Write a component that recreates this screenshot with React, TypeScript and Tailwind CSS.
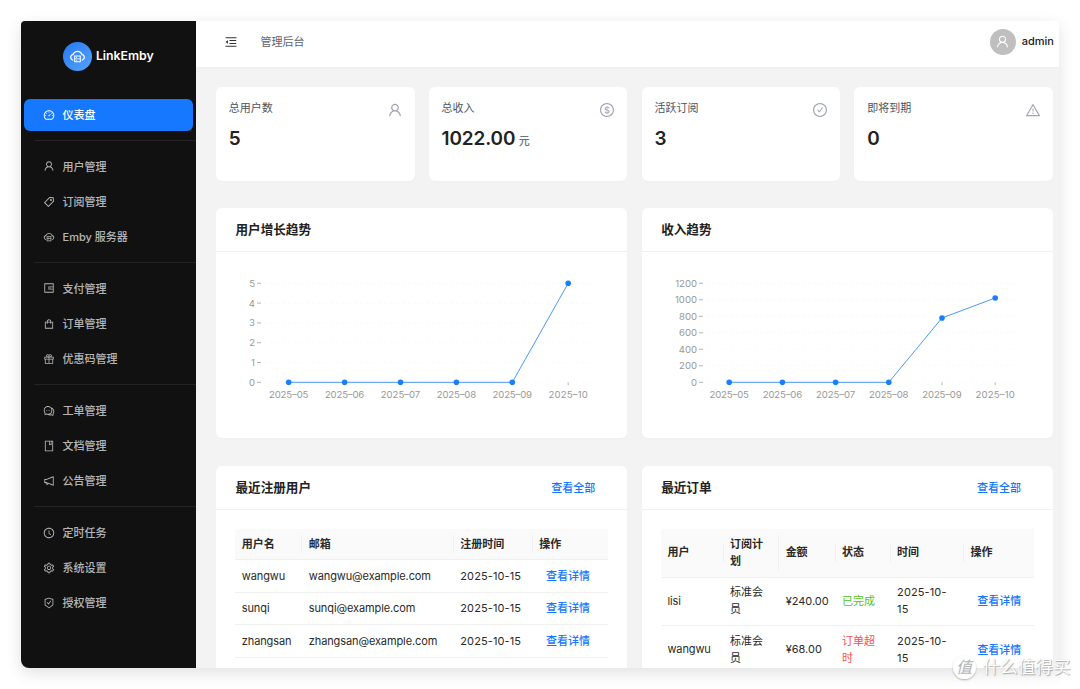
import type { ReactNode } from "react"
import type { IconType } from "react-icons"
import {
  AiOutlineBook,
  AiOutlineCheckCircle,
  AiOutlineClockCircle,
  AiOutlineCloudServer,
  AiOutlineComment,
  AiOutlineDashboard,
  AiOutlineDollarCircle,
  AiOutlineGift,
  AiOutlineMenuFold,
  AiOutlineNotification,
  AiOutlineSafetyCertificate,
  AiOutlineSetting,
  AiOutlineShopping,
  AiOutlineTag,
  AiOutlineUser,
  AiOutlineWallet,
  AiOutlineWarning,
} from "react-icons/ai"

type MenuItem = { label: string; icon: IconType }

const menuGroups: MenuItem[][] = [
  [{ label: "仪表盘", icon: AiOutlineDashboard }],
  [
    { label: "用户管理", icon: AiOutlineUser },
    { label: "订阅管理", icon: AiOutlineTag },
    { label: "Emby 服务器", icon: AiOutlineCloudServer },
  ],
  [
    { label: "支付管理", icon: AiOutlineWallet },
    { label: "订单管理", icon: AiOutlineShopping },
    { label: "优惠码管理", icon: AiOutlineGift },
  ],
  [
    { label: "工单管理", icon: AiOutlineComment },
    { label: "文档管理", icon: AiOutlineBook },
    { label: "公告管理", icon: AiOutlineNotification },
  ],
  [
    { label: "定时任务", icon: AiOutlineClockCircle },
    { label: "系统设置", icon: AiOutlineSetting },
    { label: "授权管理", icon: AiOutlineSafetyCertificate },
  ],
]

const stats = [
  { label: "总用户数", value: "5", icon: AiOutlineUser },
  { label: "总收入", value: "1022.00", unit: "元", icon: AiOutlineDollarCircle },
  { label: "活跃订阅", value: "3", icon: AiOutlineCheckCircle },
  { label: "即将到期", value: "0", icon: AiOutlineWarning },
]

const months = ["2025–05", "2025–06", "2025–07", "2025–08", "2025–09", "2025–10"]

const users = ["wangwu", "sunqi", "zhangsan"]

const orders = [
  { user: "lisi", amount: "¥240.00", status: "已完成", color: "text-[#52c41a]" },
  { user: "wangwu", amount: "¥68.00", status: "订单超时", color: "text-[#ff4d4f]" },
]

function Sidebar() {
  return (
    <aside className="flex w-[175.4px] shrink-0 flex-col bg-[#111] text-white/70">
      <div className="flex h-[76px] items-center gap-[3.5px] pb-[6px] pl-[42.4px]">
        <div className="flex size-[29px] items-center justify-center rounded-full bg-linear-to-br from-[#2478f5] to-[#56a2fb] text-white">
          <AiOutlineCloudServer size={17} />
        </div>
        <span className="pt-px text-[12.3px] font-semibold text-white">LinkEmby</span>
      </div>
      {menuGroups.map((group, i) => (
        <div key={i} className="flex flex-col">
          {i > 0 && <div className="mt-[7.9px] mb-[7.8px] ml-[13px] h-px bg-[#242424]" />}
          {group.map(({ label, icon: Icon }) => (
            <div
              key={label}
              className={
                "mx-[3px] my-[1.57px] flex h-8 items-center gap-2 rounded-md pl-[18.5px] text-[11px] font-medium " +
                (i === 0 ? "bg-[#1677ff] text-white" : "")
              }
            >
              <Icon size={12} />
              <span className="pt-[1.4px]">{label}</span>
            </div>
          ))}
        </div>
      ))}
    </aside>
  )
}

function Header() {
  return (
    <header className="flex h-[46px] shrink-0 items-center bg-white pr-[5px] pb-[5px] pl-[28px] shadow-[0_1px_2px_rgba(0,0,0,0.03)]">
      <AiOutlineMenuFold size={14} className="text-[#333]" />
      <span className="ml-[22px] pt-px text-[11px] text-[#5d6370]">管理后台</span>
      <div className="ml-auto flex items-center gap-[6px]">
        <div className="flex size-[26px] items-center justify-center rounded-full bg-[#bfbfbf] text-white">
          <AiOutlineUser size={15} />
        </div>
        <span className="text-[11px] font-medium text-[#222]">admin</span>
      </div>
    </header>
  )
}

function Card({ title, link, className, children }: { title: string; link?: boolean; className: string; children: ReactNode }) {
  return (
    <section className={"flex flex-col rounded-md bg-white shadow-[0_1px_2px_rgba(0,0,0,0.02)] " + className}>
      <div className="flex h-11 shrink-0 items-center justify-between border-b border-[#f0f0f0] pt-[2px] pr-8 pl-[19.5px]">
        <h2 className="text-[12.6px] font-semibold text-[#222]">{title}</h2>
        {link && <a className="text-[11px] font-medium text-[#1677ff]">查看全部</a>}
      </div>
      {children}
    </section>
  )
}

type ChartProps = { values: number[]; max: number; step: number; left: number; start: number; gap: number }

function LineChart({ values, max, step, left, start, gap }: ChartProps) {
  const bottom = 130.3
  const y = (v: number) => bottom - (v / max) * 99
  const x = (i: number) => start + i * gap
  const ticks = Array.from({ length: max / step + 1 }, (_, i) => i * step)

  return (
    <svg width="411" height="185" viewBox="0 0 411 185" className="text-[9.6px]" fill="#999">
      {ticks.map((t) => (
        <g key={t}>
          <text x={left - 6} y={y(t) + 3.5} textAnchor="end">{t}</text>
          <line x1={left - 4} x2={left} y1={y(t)} y2={y(t)} stroke="#aaa" strokeWidth="0.9" />
          <line x1={left + 3} x2="377" y1={y(t)} y2={y(t)} stroke="#fafafa" strokeDasharray="3 3" />
        </g>
      ))}
      {months.map((m, i) => (
        <g key={m}>
          <line x1={x(i)} x2={x(i)} y1={bottom} y2={bottom + 3} stroke="#aaa" strokeWidth="0.8" />
          <text x={x(i)} y="146.3" textAnchor="middle" textLength="39.4">{m}</text>
        </g>
      ))}
      <polyline points={values.map((v, i) => `${x(i)},${y(v)}`).join(" ")} fill="none" stroke="#4a98fb" strokeWidth="1" />
      {values.map((v, i) => (
        <circle key={i} cx={x(i)} cy={y(v)} r="2.8" fill="#1a7fff" />
      ))}
    </svg>
  )
}

function HeadCell({ children, last }: { children: ReactNode; last?: boolean }) {
  return (
    <th className="p-0 font-semibold">
      <div className={"flex min-h-[18px] items-center px-[6.3px] pt-px " + (last ? "" : "border-r border-[#f0f0f0]")}>
        {children}
      </div>
    </th>
  )
}

function UserTable() {
  return (
    <table className="mx-[19.5px] mt-[19px] w-[373px] table-fixed text-left text-[11px] leading-[17.3px] text-[#2a2a2a]">
      <colgroup>
        <col className="w-[67px]" />
        <col className="w-[151.5px]" />
        <col className="w-[79px]" />
        <col />
      </colgroup>
      <thead>
        <tr className="h-[31px] border-b border-[#f0f0f0] bg-[#fafafa]">
          <HeadCell>用户名</HeadCell>
          <HeadCell>邮箱</HeadCell>
          <HeadCell>注册时间</HeadCell>
          <HeadCell last>操作</HeadCell>
        </tr>
      </thead>
      <tbody>
        {users.map((name) => (
          <tr key={name} className="h-[32.7px] border-b border-[#f0f0f0]">
            <td className="px-[6.3px] pt-px tracking-[-0.01em]">{name}</td>
            <td className="px-[6.3px] pt-px tracking-[-0.01em]">{name}@example.com</td>
            <td className="px-[6.3px] pt-px tracking-[0.01em] whitespace-nowrap">2025-10-15</td>
            <td className="pt-px pl-[13px] font-medium text-[#1677ff]">查看详情</td>
          </tr>
        ))}
      </tbody>
    </table>
  )
}

function OrderTable() {
  return (
    <table className="mx-[19.5px] mt-[19px] w-[373px] table-fixed text-left text-[11px] leading-[17.3px] text-[#2a2a2a]">
      <colgroup>
        <col className="w-[62.5px]" />
        <col className="w-[55.7px]" />
        <col className="w-[56.3px]" />
        <col className="w-[55.2px]" />
        <col className="w-[73.5px]" />
        <col />
      </colgroup>
      <thead>
        <tr className="h-[48.5px] border-b border-[#f0f0f0] bg-[#fafafa]">
          <HeadCell>用户</HeadCell>
          <HeadCell>订阅计划</HeadCell>
          <HeadCell>金额</HeadCell>
          <HeadCell>状态</HeadCell>
          <HeadCell>时间</HeadCell>
          <HeadCell last>操作</HeadCell>
        </tr>
      </thead>
      <tbody>
        {orders.map((o) => (
          <tr key={o.user} className="h-[48.7px] border-b border-[#f0f0f0]">
            <td className="px-[6.3px] tracking-[-0.01em]">{o.user}</td>
            <td className="px-[6.3px]">标准会员</td>
            <td className="pl-[6.3px] whitespace-nowrap">{o.amount}</td>
            <td className={"px-[6.3px] " + o.color}>{o.status}</td>
            <td className="px-[6.3px] tracking-[0.01em]">2025-10-<br />15</td>
            <td className="pt-px pl-[13px] font-medium text-[#1677ff]">查看详情</td>
          </tr>
        ))}
      </tbody>
    </table>
  )
}

function Watermark() {
  return (
    <div className="absolute right-[9.5px] bottom-[10px] flex items-center gap-[7px] text-white">
      <span className="flex size-[23px] items-center justify-center rounded-full bg-white/85 text-[16px] text-[#b4b4b4] italic shadow-[0_1px_2px_rgba(0,0,0,0.3)]">
        值
      </span>
      <span className="text-[17.6px] leading-6 [text-shadow:1px_1px_1px_rgba(0,0,0,0.3),0_0_1px_rgba(0,0,0,0.15)]">
        什么值得买
      </span>
    </div>
  )
}

export default function App() {
  return (
    <div className="relative h-[689px] w-[1080px] overflow-hidden bg-white p-[21px] font-['Inter','Noto_Sans_CJK_SC',sans-serif]">
      <div className="flex h-[647px] w-[1038px] overflow-hidden rounded-[4px] rounded-bl-[8px] bg-[#f3f3f3] shadow-[0_5px_16px_rgba(0,0,0,0.12)]">
        <Sidebar />
        <div className="flex min-w-0 flex-1 flex-col">
          <Header />
          <main className="flex flex-col pt-5 pr-[6px] pl-[19.6px]">
            <div className="grid grid-cols-4 gap-[14.3px]">
              {stats.map(({ label, value, unit, icon: Icon }) => (
                <div key={label} className="flex h-[94px] justify-between rounded-md bg-white pr-[12px] pl-[12.8px] shadow-[0_1px_2px_rgba(0,0,0,0.02)]">
                  <div>
                    <p className="mt-[13px] text-[11px] leading-[17px] text-[#4b5563]">{label}</p>
                    <p className="mt-[9px] text-[18.9px] leading-[26px] font-semibold tracking-[-0.005em] text-[#222]">
                      {value}
                      {unit && <span className="ml-[3.5px] text-[11px] font-medium text-[#6b7280]">{unit}</span>}
                    </p>
                  </div>
                  <Icon size={16} className="mt-[15px] text-[#a0a5b0]" />
                </div>
              ))}
            </div>
            <div className="mt-[27px] grid grid-cols-2 gap-[14.3px]">
              <Card title="用户增长趋势" className="h-[230px]">
                <LineChart values={[0, 0, 0, 0, 0, 5]} max={5} step={1} left={45} start={72.7} gap={55.9} />
              </Card>
              <Card title="收入趋势" className="h-[230px]">
                <LineChart values={[0, 0, 0, 0, 780, 1022]} max={1200} step={200} left={61} start={87.2} gap={53.2} />
              </Card>
            </div>
            <div className="mt-[27.5px] grid grid-cols-2 gap-[14.3px]">
              <Card title="最近注册用户" link className="h-[260px]">
                <UserTable />
              </Card>
              <Card title="最近订单" link className="h-[260px]">
                <OrderTable />
              </Card>
            </div>
          </main>
        </div>
      </div>
      <Watermark />
    </div>
  )
}
